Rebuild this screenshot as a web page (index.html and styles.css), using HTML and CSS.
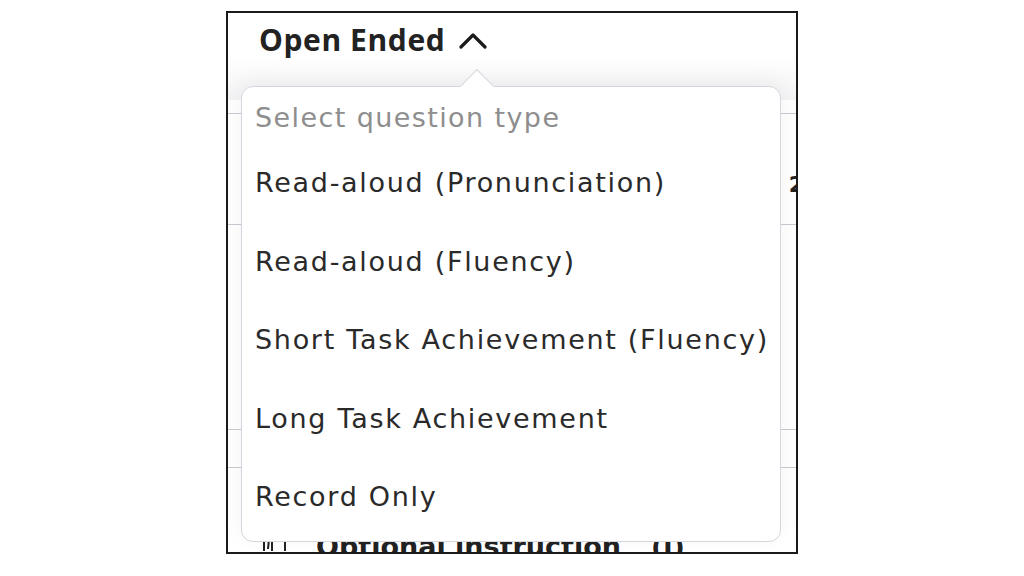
FILE: index.html
```html
<!DOCTYPE html>
<html>
<head>
<meta charset="utf-8">
<link rel="stylesheet" href="styles.css">
</head>
<body>
<div class="frame">
  <div class="header">
    <span class="header-title">Open Ended</span>
    <svg class="chevron" width="28" height="18" viewBox="0 0 28 18"><path d="M2 15 L14 3 L26 15" fill="none" stroke="#1c1c1c" stroke-width="3.2" stroke-linecap="round" stroke-linejoin="round"/></svg>
  </div>
  <div class="sheet">
    <div class="row row-1"><span class="cell-num">2</span></div>
    <div class="row row-2"></div>
    <div class="row row-3"></div>
    <div class="row row-4">
      <div class="opt">
        <svg class="opt-icon" width="30" height="20" viewBox="0 0 30 20"><path d="M2 2 V18 M10 2 V18 M5 6 L7 6 L6 16 M23 2 V18" stroke="#222" stroke-width="2" fill="none"/></svg>
        <span class="opt-text">Optional instruction</span>
        <span class="opt-info">(i)</span>
      </div>
    </div>
  </div>
  <div class="dropdown">
    <div class="dd-label">Select question type</div>
    <div class="dd-item">Read-aloud (Pronunciation)</div>
    <div class="dd-item">Read-aloud (Fluency)</div>
    <div class="dd-item">Short Task Achievement (Fluency)</div>
    <div class="dd-item">Long Task Achievement</div>
    <div class="dd-item">Record Only</div>
  </div>
</div>
</body>
</html>
```
FILE: styles.css
```css
html, body {
  margin: 0;
  padding: 0;
  background: #ffffff;
}
body {
  font-family: "DejaVu Sans", "Open Sans", sans-serif;
  width: 1024px;
  height: 576px;
  overflow: hidden;
}
.frame {
  margin: 11px 0 0 226px;
  width: 572px;
  height: 543px;
  box-sizing: border-box;
  border: 2px solid #1a1a1a;
  position: relative;
  overflow: hidden;
  background: #ffffff;
}
.header {
  height: 87px;
  box-sizing: border-box;
  padding: 7px 0 0 31px;
  display: flex;
  align-items: flex-start;
  gap: 14px;
  background: linear-gradient(#ffffff 0, #ffffff 45px, #f3f3f5 87px);
}
.header-title {
  font-family: "Open Sans", "DejaVu Sans", sans-serif;
  font-size: 30px;
  line-height: 40px;
  font-weight: 700;
  color: #222222;
  letter-spacing: 0.6px;
}
.chevron {
  margin-top: 12px;
}
.sheet {
  display: flex;
  flex-direction: column;
  margin-top: 13px;
}
.row {
  border-top: 1.5px solid #c9c9d2;
  display: flex;
  justify-content: flex-end;
}
.row-1 {
  height: 110px;
  align-items: center;
}
.row-2 { height: 204px; }
.row-3 { height: 37px; }
.row-4 {
  height: 90px;
  align-items: flex-end;
  justify-content: flex-start;
}
.cell-num {
  font-size: 22px;
  font-weight: 700;
  color: #222;
  margin-right: -8px;
  margin-top: 30px;
}
.opt {
  display: flex;
  align-items: flex-end;
  gap: 24px;
  padding-left: 34px;
  margin-bottom: -4px;
}
.opt-icon { margin-bottom: 9px; }
.opt-text, .opt-info {
  font-size: 27px;
  font-weight: 700;
  color: #222;
}
.opt-info { margin-left: 6px; }
.dropdown {
  position: absolute;
  left: 13px;
  top: 73px;
  width: 540px;
  height: 456px;
  box-sizing: border-box;
  border: 1.5px solid #d6d6de;
  border-radius: 12px;
  background: #ffffff;
  padding: 13px 0 0 13px;
  box-shadow: 0 -6px 22px rgba(0, 0, 0, 0.05);
}
.dropdown::before {
  content: "";
  position: absolute;
  left: 223px;
  top: -13px;
  width: 23px;
  height: 23px;
  background: #ffffff;
  border-top: 1.5px solid #d6d6de;
  border-left: 1.5px solid #d6d6de;
  transform: rotate(45deg);
}
.dd-label {
  position: relative;
  font-size: 27px;
  line-height: 36px;
  color: #8e8e8e;
  margin-bottom: 8px;
  letter-spacing: 1.4px;
}
.dd-item {
  font-size: 27px;
  height: 78.5px;
  line-height: 78.5px;
  color: #2a2a2a;
  letter-spacing: 1.7px;
}
```
